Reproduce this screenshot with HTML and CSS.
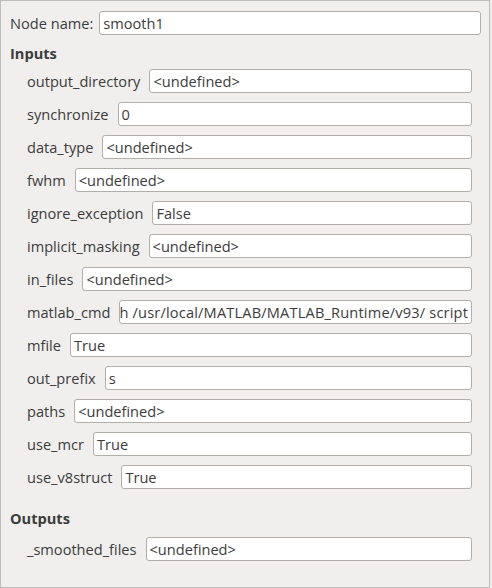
FILE: index.html
```html
<!DOCTYPE html>
<html>
<head>
<meta charset="utf-8">
<link rel="stylesheet" href="styles.css">
</head>
<body>
<div class="panel">
  <div class="name-row">
    <span class="label">Node name:</span>
    <div class="field">smooth1</div>
  </div>
  <div class="section-title">Inputs</div>
  <div class="rows">
    <div class="row"><span class="label">output_directory</span><div class="field">&lt;undefined&gt;</div></div>
    <div class="row"><span class="label">synchronize</span><div class="field">0</div></div>
    <div class="row"><span class="label">data_type</span><div class="field">&lt;undefined&gt;</div></div>
    <div class="row"><span class="label">fwhm</span><div class="field">&lt;undefined&gt;</div></div>
    <div class="row"><span class="label">ignore_exception</span><div class="field">False</div></div>
    <div class="row"><span class="label">implicit_masking</span><div class="field">&lt;undefined&gt;</div></div>
    <div class="row"><span class="label">in_files</span><div class="field">&lt;undefined&gt;</div></div>
    <div class="row"><span class="label">matlab_cmd</span><div class="field field-end">h /usr/local/MATLAB/MATLAB_Runtime/v93/ script</div></div>
    <div class="row"><span class="label">mfile</span><div class="field">True</div></div>
    <div class="row"><span class="label">out_prefix</span><div class="field">s</div></div>
    <div class="row"><span class="label">paths</span><div class="field">&lt;undefined&gt;</div></div>
    <div class="row"><span class="label">use_mcr</span><div class="field">True</div></div>
    <div class="row"><span class="label">use_v8struct</span><div class="field">True</div></div>
  </div>
  <div class="section-title outputs">Outputs</div>
  <div class="rows">
    <div class="row"><span class="label">_smoothed_files</span><div class="field">&lt;undefined&gt;</div></div>
  </div>
</div>
</body>
</html>
```
FILE: styles.css
```css
html, body {
  margin: 0;
  padding: 0;
  background: #f0efed;
}
body {
  font-family: "Open Sans", "Noto Sans", sans-serif;
  font-size: 14.6px;
  color: #3c3c3c;
}
.panel {
  width: 490px;
  height: 588px;
  box-sizing: border-box;
  border: 1px solid #bebcb8;
  padding: 10px 8px 0 9px;
  background: #f0efed;
}
.name-row {
  display: flex;
  align-items: center;
  gap: 6px;
  height: 24px;
}
.label {
  white-space: nowrap;
  flex: none;
  line-height: 20px;
}
.field {
  flex: 1;
  min-width: 0;
  height: 24px;
  box-sizing: border-box;
  border: 1px solid #b2afab;
  border-radius: 3px;
  background: #ffffff;
  padding: 0 3px;
  line-height: 22px;
  white-space: nowrap;
  overflow: hidden;
}
.field-end {
  display: flex;
  justify-content: flex-end;
  padding: 0 3px 0 0;
  letter-spacing: 0.17px;
}
.section-title {
  font-weight: bold;
  line-height: 20px;
  margin: 8px 0 6px;
}
.section-title.outputs {
  margin: 19px 0 9px;
}
.rows {
  display: flex;
  flex-direction: column;
  gap: 9px;
  padding: 0 9px 0 17px;
}
.row {
  display: flex;
  align-items: center;
  gap: 9px;
  height: 24px;
}
```
